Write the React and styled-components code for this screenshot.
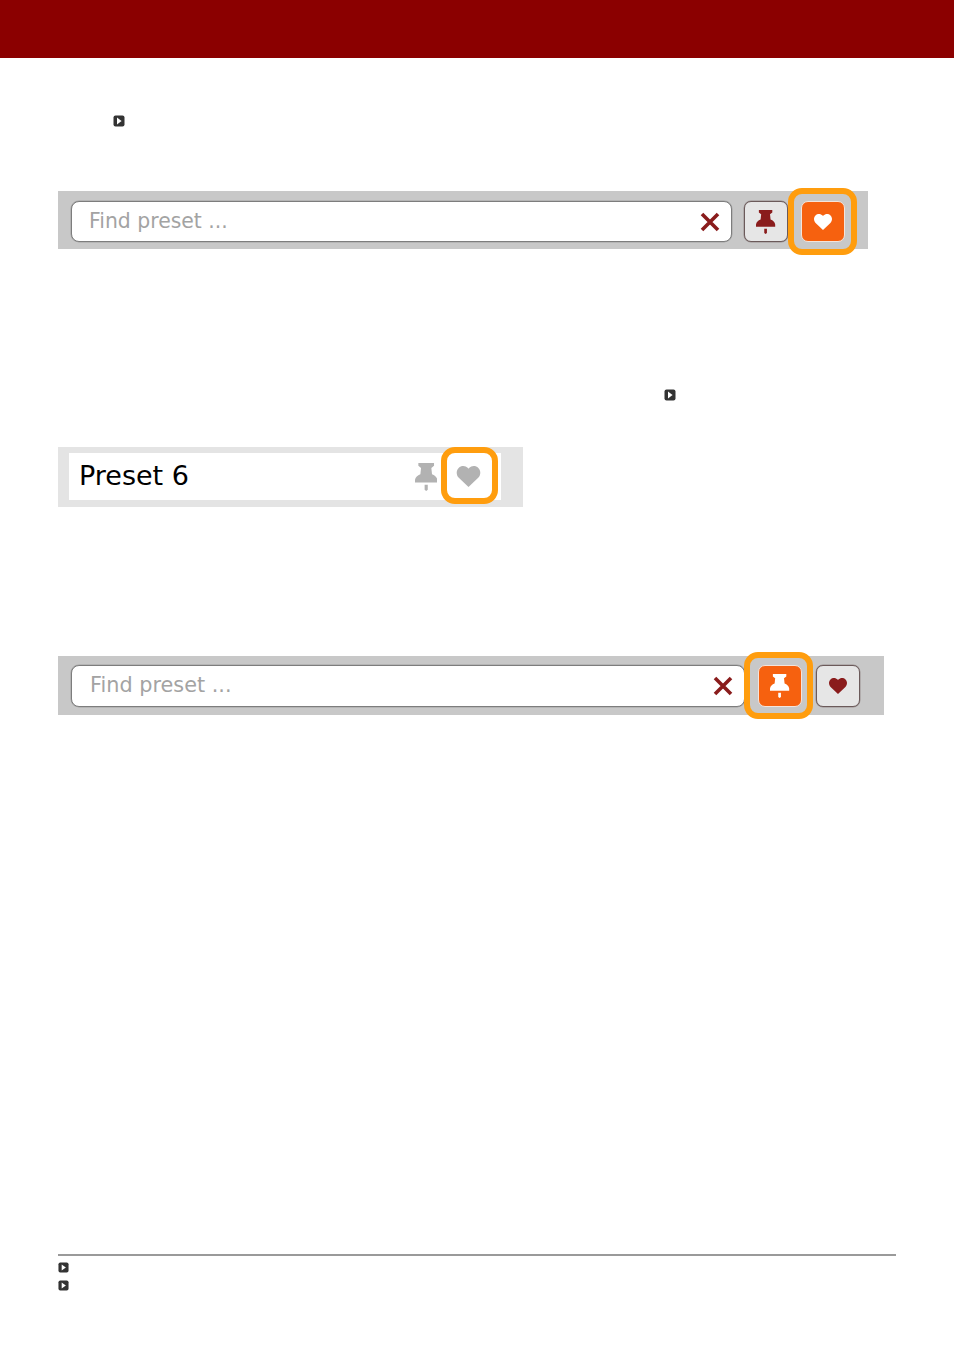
import React from "react";
import styled, { createGlobalStyle } from "styled-components";

const GlobalStyle = createGlobalStyle`
  html, body {
    margin: 0;
    padding: 0;
    background: #fff;
    font-family: "DejaVu Sans", sans-serif;
  }
`;

const Page = styled.div`
  width: 954px;
  height: 1349px;
  display: flex;
  flex-direction: column;
`;

const Banner = styled.div`
  height: 58px;
  flex: none;
  background: #8b0000;
`;

const Content = styled.div`
  flex: 1;
  padding: 0 58px;
  display: flex;
  flex-direction: column;
`;

const MarkerRow = styled.div`
  display: flex;
  height: 12px;
  margin-top: ${(p) => p.$top}px;
  padding-left: ${(p) => p.$left}px;
`;

const MarkerIcon = styled.svg`
  width: ${(p) => p.$size}px;
  height: ${(p) => p.$size}px;
  display: block;
`;

const Toolbar = styled.div`
  width: ${(p) => p.$width}px;
  height: ${(p) => p.$height}px;
  margin-top: ${(p) => p.$top}px;
  box-sizing: border-box;
  padding: ${(p) => p.$padding};
  background: #c8c8c8;
  display: flex;
  align-items: stretch;
`;

const SearchBox = styled.div`
  flex: 1;
  display: flex;
  align-items: center;
  box-sizing: border-box;
  padding: 0 ${(p) => p.$iconInset}px 0 ${(p) => p.$textInset}px;
  background: #fff;
  border: 1px solid #7d7d7d;
  box-shadow: 0 0 0 0.5px rgba(125, 125, 125, 0.5);
  border-radius: 8px;
`;

const SearchInput = styled.input`
  flex: 1;
  min-width: 0;
  border: none;
  outline: none;
  padding: 0 0 2px;
  background: transparent;
  font-family: "DejaVu Sans", sans-serif;
  font-size: ${(p) => p.$size}px;
  color: #333;

  &::placeholder {
    color: #a3a3a3;
    opacity: 1;
  }
`;

const ToolButton = styled.button`
  position: relative;
  width: 44px;
  flex: none;
  margin-left: ${(p) => p.$gap}px;
  padding: 0;
  display: flex;
  align-items: center;
  justify-content: center;
  box-sizing: border-box;
  border-radius: 7px;
  border: 1px solid ${(p) => (p.$active ? "#f5e4da" : "#6b5a5a")};
  box-shadow: ${(p) => (p.$active ? "none" : "0 0 0 0.5px rgba(107, 90, 90, 0.5)")};
  background: ${(p) => (p.$active ? "#f6610f" : "#e6e6e6")};
  color: ${(p) => (p.$active ? "#fff" : "#8a1c1c")};
`;

const Highlight = styled.span`
  position: absolute;
  top: ${(p) => p.$top}px;
  left: ${(p) => p.$left}px;
  width: ${(p) => p.$width}px;
  height: ${(p) => p.$height}px;
  box-sizing: border-box;
  border: 6px solid #ff9d0e;
  border-radius: 14px;
  pointer-events: none;
`;

const PresetBar = styled.div`
  width: 465px;
  height: 60px;
  margin-top: 46px;
  box-sizing: border-box;
  padding: 6px 22px 7px 11px;
  background: #e4e4e4;
  display: flex;
`;

const PresetRow = styled.div`
  flex: 1;
  display: flex;
  align-items: center;
  padding-left: 10px;
  background: #fff;
`;

const PresetName = styled.span`
  flex: 1;
  font-size: 27px;
  color: #000;
  position: relative;
  top: -1px;
`;

const PresetAction = styled.span`
  position: relative;
  width: 36px;
  height: 100%;
  display: flex;
  align-items: center;
  justify-content: center;
  color: #b2b2b2;
  margin-right: ${(p) => p.$right}px;
`;

const Footer = styled.div`
  margin-top: auto;
  margin-bottom: 58px;
  border-top: 2px solid #9a9a9a;
  padding-top: 6px;
  display: flex;
  flex-direction: column;
  gap: 7px;
`;

const Marker = ({ size = 12 }) => (
  <MarkerIcon $size={size} viewBox="0 0 12 12">
    <rect x="0.5" y="0.5" width="11" height="11" rx="2" fill="#333" />
    <path d="M4 2.6 L8.6 6 L4 9.4 Z" fill="#fff" />
  </MarkerIcon>
);

const PinIcon = ({ size = 24 }) => (
  <svg width={size * 0.8} height={size} viewBox="0 0 20 25" fill="currentColor">
    <path d="M3 0 H17 V2.5 L14.6 4.5 L15.2 10 C17.8 11 19.6 12.8 20 15 V17.5 H0 V15 C0.4 12.8 2.2 11 4.8 10 L5.4 4.5 L3 2.5 Z" />
    <path d="M8.6 19.5 H11.4 V24 L10 25 L8.6 24 Z" />
  </svg>
);

const HeartIcon = ({ width = 18, height = 16 }) => (
  <svg width={width} height={height} viewBox="0 0 18 16" fill="currentColor">
    <path d="M9 16 L1.6 8.9 C-0.5 6.8 -0.5 3.4 1.5 1.5 C3.5 -0.5 6.7 -0.4 8.6 1.6 L9 2 L9.4 1.6 C11.3 -0.4 14.5 -0.5 16.5 1.5 C18.5 3.4 18.5 6.8 16.4 8.9 Z" />
  </svg>
);

const ClearIcon = () => (
  <svg width="20" height="20" viewBox="0 0 20 20" style={{ flex: "none" }}>
    <path d="M2 2 L18 18 M18 2 L2 18" stroke="#8a1c1c" strokeWidth="3.6" fill="none" />
  </svg>
);

const App = () => (
  <>
    <GlobalStyle />
    <Page>
      <Banner />
      <Content>
        <MarkerRow $top={57} $left={55}>
          <Marker />
        </MarkerRow>

        <Toolbar $width={810} $height={58} $top={64} $padding="10px 23px 7px 13px">
          <SearchBox $iconInset={11} $textInset={17}>
            <SearchInput $size={20.4} placeholder="Find preset ..." readOnly />
            <ClearIcon />
          </SearchBox>
          <ToolButton $gap={12}>
            <PinIcon />
          </ToolButton>
          <ToolButton $gap={13} $active>
            <HeartIcon />
            <Highlight $top={-14} $left={-14} $width={69} $height={67} />
          </ToolButton>
        </Toolbar>

        <MarkerRow $top={140} $left={606}>
          <Marker />
        </MarkerRow>

        <PresetBar>
          <PresetRow>
            <PresetName>Preset 6</PresetName>
            <PresetAction $right={6}>
              <PinIcon size={28} />
            </PresetAction>
            <PresetAction $right={15}>
              <HeartIcon width={25} height={21} />
              <Highlight $top={-6} $left={-9} $width={57} $height={57} />
            </PresetAction>
          </PresetRow>
        </PresetBar>

        <Toolbar $width={826} $height={59} $top={149} $padding="9px 24px 8px 13px">
          <SearchBox $iconInset={11} $textInset={18}>
            <SearchInput $size={20.8} placeholder="Find preset ..." readOnly />
            <ClearIcon />
          </SearchBox>
          <ToolButton $gap={13} $active>
            <PinIcon />
            <Highlight $top={-14} $left={-15} $width={69} $height={67} />
          </ToolButton>
          <ToolButton $gap={14}>
            <HeartIcon />
          </ToolButton>
        </Toolbar>

        <Footer>
          <Marker size={11} />
          <Marker size={11} />
        </Footer>
      </Content>
    </Page>
  </>
);

export default App;
